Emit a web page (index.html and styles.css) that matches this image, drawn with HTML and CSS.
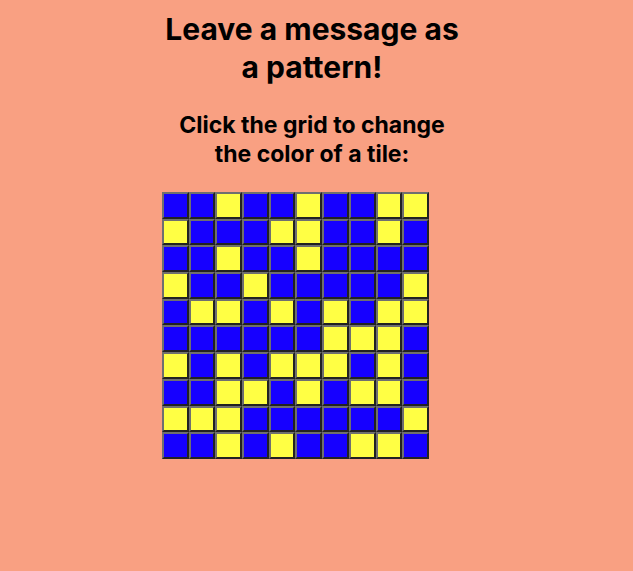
FILE: index.html
```html
<!DOCTYPE html>
<html>
<head>
<meta charset="utf-8">
<link rel="stylesheet" href="styles.css">
</head>
<body>
<main class="panel">
  <h1 class="title">Leave a message as a pattern!</h1>
  <h2 class="subtitle">Click the grid to change the color of a tile:</h2>
  <div class="grid">
    <div class="tile b"></div><div class="tile b"></div><div class="tile y"></div><div class="tile b"></div><div class="tile b"></div><div class="tile y"></div><div class="tile b"></div><div class="tile b"></div><div class="tile y"></div><div class="tile y"></div>
    <div class="tile y"></div><div class="tile b"></div><div class="tile b"></div><div class="tile b"></div><div class="tile y"></div><div class="tile y"></div><div class="tile b"></div><div class="tile b"></div><div class="tile y"></div><div class="tile b"></div>
    <div class="tile b"></div><div class="tile b"></div><div class="tile y"></div><div class="tile b"></div><div class="tile b"></div><div class="tile y"></div><div class="tile b"></div><div class="tile b"></div><div class="tile b"></div><div class="tile b"></div>
    <div class="tile y"></div><div class="tile b"></div><div class="tile b"></div><div class="tile y"></div><div class="tile b"></div><div class="tile b"></div><div class="tile b"></div><div class="tile b"></div><div class="tile b"></div><div class="tile y"></div>
    <div class="tile b"></div><div class="tile y"></div><div class="tile y"></div><div class="tile b"></div><div class="tile y"></div><div class="tile b"></div><div class="tile y"></div><div class="tile b"></div><div class="tile y"></div><div class="tile y"></div>
    <div class="tile b"></div><div class="tile b"></div><div class="tile b"></div><div class="tile b"></div><div class="tile b"></div><div class="tile b"></div><div class="tile y"></div><div class="tile y"></div><div class="tile y"></div><div class="tile b"></div>
    <div class="tile y"></div><div class="tile b"></div><div class="tile y"></div><div class="tile b"></div><div class="tile y"></div><div class="tile y"></div><div class="tile y"></div><div class="tile b"></div><div class="tile y"></div><div class="tile b"></div>
    <div class="tile b"></div><div class="tile b"></div><div class="tile y"></div><div class="tile y"></div><div class="tile b"></div><div class="tile y"></div><div class="tile b"></div><div class="tile y"></div><div class="tile y"></div><div class="tile b"></div>
    <div class="tile y"></div><div class="tile y"></div><div class="tile y"></div><div class="tile b"></div><div class="tile b"></div><div class="tile b"></div><div class="tile b"></div><div class="tile b"></div><div class="tile b"></div><div class="tile y"></div>
    <div class="tile b"></div><div class="tile b"></div><div class="tile y"></div><div class="tile b"></div><div class="tile y"></div><div class="tile b"></div><div class="tile b"></div><div class="tile y"></div><div class="tile y"></div><div class="tile b"></div>
  </div>
</main>
</body>
</html>
```
FILE: styles.css
```css
html, body {
  margin: 0;
  padding: 0;
  background: #f9a082;
}
body {
  font-family: Inter, "Liberation Sans", sans-serif;
  color: #000;
  min-height: 571px;
}
.panel {
  width: 300px;
  margin-left: 162px;
  padding-top: 10px;
  display: flex;
  flex-direction: column;
}
.title {
  margin: 0;
  font-size: 30px;
  line-height: 38px;
  font-weight: 700;
  text-align: center;
}
.subtitle {
  margin: 25px 0 0;
  font-size: 23px;
  line-height: 28.5px;
  font-weight: 700;
  text-align: center;
}
.grid {
  margin-top: 24px;
  display: grid;
  grid-template-columns: repeat(10, 26.7px);
  grid-auto-rows: 26.7px;
  width: 267px;
}
.tile {
  box-sizing: border-box;
  border-style: solid;
  border-width: 2px;
  border-color: #6f6f6f #222222 #222222 #6f6f6f;
}
.b { background: #1600ff; }
.y { background: #ffff44; }
```
